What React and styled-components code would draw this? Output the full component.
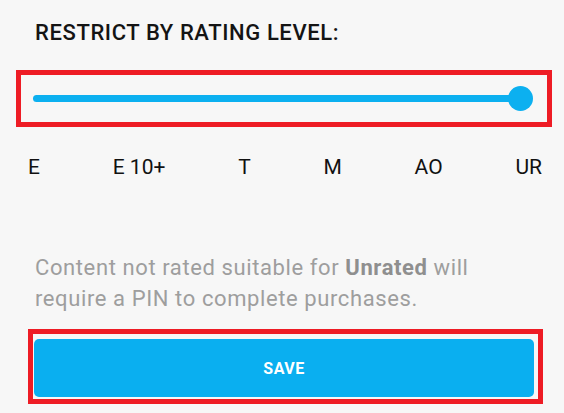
import styled, { createGlobalStyle } from "styled-components"

const Global = createGlobalStyle`
  body {
    margin: 0;
    background: #f7f7f7;
    font-family: Roboto, "Liberation Sans", sans-serif;
  }
`

const Page = styled.div`
  width: 564px;
  height: 413px;
  overflow: hidden;
  padding-top: 21px;
  box-sizing: border-box;
`
const Title = styled.h2`
  margin: 0 0 0 35px;
  font-size: 22px;
  line-height: 24px;
  font-weight: 500;
  color: #141414;
  letter-spacing: 0.6px;
`
const Highlight = styled.div`
  border: 5px solid #ee1c25;
  box-sizing: border-box;
  margin: ${p => p.$margin};
  height: ${p => p.$height}px;
  display: flex;
  align-items: center;
  padding: ${p => p.$pad};
`
const Track = styled.div`
  flex: 1;
  height: 7px;
  border-radius: 4px;
  background: #0cb0f0;
  position: relative;
`
const Thumb = styled.div`
  position: absolute;
  right: -12px;
  top: 50%;
  width: 25px;
  height: 25px;
  margin-top: -12.5px;
  border-radius: 50%;
  background: #0cb0f0;
`
const Labels = styled.div`
  display: flex;
  justify-content: space-between;
  padding: 0 22px 0 28px;
  margin-top: 28px;
  font-size: 21px;
  line-height: 24px;
  color: #111;
`
const Note = styled.p`
  margin: 73px 0 0 35px;
  font-size: 22px;
  line-height: 31px;
  letter-spacing: 0.6px;
  color: #9e9e9e;
  b {
    font-weight: 700;
    color: #8f8f8f;
  }
`
const Button = styled.button`
  flex: 1;
  height: 58px;
  border: none;
  border-radius: 5px;
  background: #0aaff0;
  color: #fff;
  font-family: inherit;
  font-size: 16px;
  font-weight: 700;
  letter-spacing: 0.5px;
`

const levels = ["E", "E 10+", "T", "M", "AO", "UR"]

const App = () => {
  return (
    <Page>
      <Global />
      <Title>RESTRICT BY RATING LEVEL:</Title>
      <Highlight $margin="25px 12px 0 16px" $height={57} $pad="0 26px 0 12px">
        <Track>
          <Thumb />
        </Track>
      </Highlight>
      <Labels>
        {levels.map(l => <span key={l}>{l}</span>)}
      </Labels>
      <Note>
        Content not rated suitable for <b>Unrated</b> will<br />
        require a PIN to complete purchases.
      </Note>
      <Highlight $margin="15px 21px 0 28px" $height={75} $pad="4px 4px 1px 1px">
        <Button>SAVE</Button>
      </Highlight>
    </Page>
  );
}

export default App;
